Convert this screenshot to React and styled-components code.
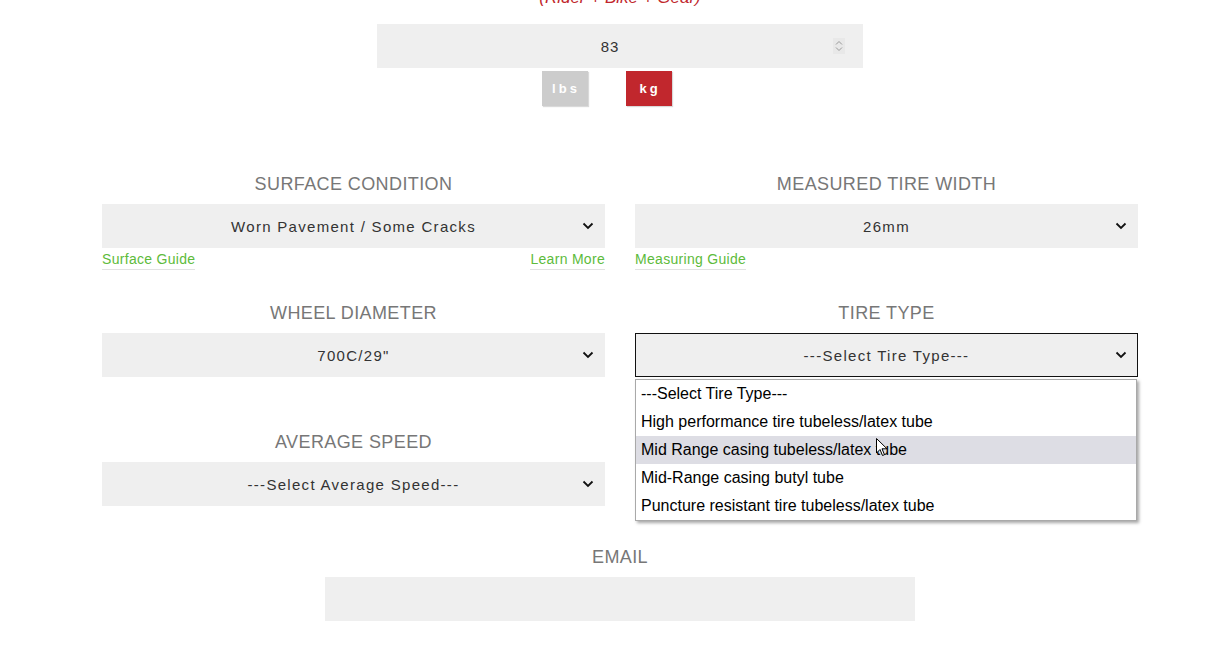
import React, { useState } from 'react';
import styled, { createGlobalStyle } from 'styled-components';

const GlobalStyle = createGlobalStyle`
  html, body {
    margin: 0;
    padding: 0;
    background: #fff;
    overflow: hidden;
  }
  body {
    font-family: "Liberation Sans", Arial, sans-serif;
  }
`;

const Page = styled.div`
  width: 1036px;
  margin-left: 102px;
  display: flex;
  flex-direction: column;
  align-items: center;
`;

const Subtitle = styled.div`
  margin-top: -12px;
  height: 20px;
  line-height: 20px;
  font-size: 17px;
  font-style: italic;
  color: #c1272d;
`;

const NumberBox = styled.div`
  margin-top: 16px;
  width: 486px;
  height: 44px;
  box-sizing: border-box;
  padding-right: 20px;
  background: #efefef;
  display: flex;
  align-items: center;
  justify-content: center;
  position: relative;
  font-size: 15px;
  color: #333;
  letter-spacing: 1px;
`;

const Spinner = styled.span`
  position: absolute;
  right: 18px;
  top: 14px;
  width: 12px;
  height: 16px;
  display: flex;
  align-items: center;
  justify-content: center;
  background: #e8e8e8;
`;

const UnitRow = styled.div`
  margin-top: 3px;
  display: flex;
  gap: 38px;
  margin-right: 27px;
`;

const UnitButton = styled.button`
  width: 46px;
  height: 35px;
  border: none;
  padding: 0;
  background: ${({ $active }) => ($active ? '#c1272d' : '#cccccc')};
  color: #fff;
  font-family: "Liberation Sans", Arial, sans-serif;
  font-weight: bold;
  font-size: 13px;
  letter-spacing: 3px;
  text-indent: 3px;
  box-shadow: 1px 1px 1px rgba(0, 0, 0, 0.15);
  cursor: pointer;
`;

const Grid = styled.div`
  margin-top: 67px;
  width: 100%;
  display: grid;
  grid-template-columns: 1fr 1fr;
  column-gap: 30px;
  row-gap: 30px;
`;

const Field = styled.div`
  display: flex;
  flex-direction: column;
  position: relative;
`;

const Label = styled.div`
  height: 22px;
  line-height: 22px;
  font-size: 18px;
  letter-spacing: 0.4px;
  color: #777;
  text-align: center;
  text-transform: uppercase;
  margin-bottom: 9px;
`;

const SelectBox = styled.div`
  height: 44px;
  box-sizing: border-box;
  background: #efefef;
  border: ${({ $focused }) => ($focused ? '1px solid #111' : '1px solid #efefef')};
  display: flex;
  align-items: center;
  justify-content: center;
  position: relative;
  font-size: 15px;
  color: #333;
  letter-spacing: 1.3px;
`;

const Chevron = styled.svg`
  position: absolute;
  right: 10px;
  top: 50%;
  margin-top: -5px;
`;

const LinkRow = styled.div`
  height: 24px;
  display: flex;
  justify-content: space-between;
  align-items: flex-start;
  padding-top: 3px;
  box-sizing: border-box;
`;

const GuideLink = styled.a`
  font-size: 14px;
  letter-spacing: 0.3px;
  color: #5dbb3b;
  text-decoration: none;
  line-height: 17px;
  border-bottom: 1px solid #e2e2e2;
  padding-bottom: 1px;
`;

const Dropdown = styled.ul`
  position: absolute;
  top: 77px;
  left: 0;
  right: 1px;
  margin: 0;
  padding: 0;
  list-style: none;
  background: #fff;
  border: 1px solid #a9a9a9;
  box-shadow: 2px 2px 3px rgba(0, 0, 0, 0.35);
  z-index: 5;
`;

const Option = styled.li`
  height: 28px;
  line-height: 28px;
  padding-left: 5px;
  font-size: 16px;
  color: #000;
  background: ${({ $hover }) => ($hover ? '#dddde4' : 'transparent')};
`;

const Cursor = styled.svg`
  position: absolute;
  left: 240px;
  top: 58px;
`;

const EmailSection = styled.div`
  margin-top: 40px;
  display: flex;
  flex-direction: column;
  align-items: center;
`;

const EmailInput = styled.div`
  width: 590px;
  height: 44px;
  background: #efefef;
`;

const ChevronIcon = () => (
  <Chevron width="12" height="10" viewBox="0 0 12 10">
    <path d="M1.5 2.5 L6 7 L10.5 2.5" fill="none" stroke="#111" strokeWidth="1.8" />
  </Chevron>
);

const Select = ({ value, focused }) => (
  <SelectBox $focused={focused}>
    {value}
    <ChevronIcon />
  </SelectBox>
);

const tireTypes = [
  '---Select Tire Type---',
  'High performance tire tubeless/latex tube',
  'Mid Range casing tubeless/latex tube',
  'Mid-Range casing butyl tube',
  'Puncture resistant tire tubeless/latex tube',
];

const App = () => {
  const [unit, setUnit] = useState('kg');

  return (
    <>
      <GlobalStyle />
      <Page>
        <Subtitle>(Rider + Bike + Gear)</Subtitle>
        <NumberBox>
          83
          <Spinner>
            <svg width="8" height="12" viewBox="0 0 8 12">
              <path d="M1 4.5 L4 1.5 L7 4.5 M1 7.5 L4 10.5 L7 7.5" fill="none" stroke="#999" strokeWidth="1" />
            </svg>
          </Spinner>
        </NumberBox>
        <UnitRow>
          <UnitButton $active={unit === 'lbs'} onClick={() => setUnit('lbs')}>lbs</UnitButton>
          <UnitButton $active={unit === 'kg'} onClick={() => setUnit('kg')}>kg</UnitButton>
        </UnitRow>

        <Grid>
          <Field>
            <Label>Surface Condition</Label>
            <Select value="Worn Pavement / Some Cracks" />
            <LinkRow>
              <GuideLink href="#">Surface Guide</GuideLink>
              <GuideLink href="#">Learn More</GuideLink>
            </LinkRow>
          </Field>
          <Field>
            <Label>Measured Tire Width</Label>
            <Select value="26mm" />
            <LinkRow>
              <GuideLink href="#">Measuring Guide</GuideLink>
            </LinkRow>
          </Field>

          <Field>
            <Label>Wheel Diameter</Label>
            <Select value={'700C/29"'} />
            <LinkRow />
          </Field>
          <Field>
            <Label>Tire Type</Label>
            <Select value="---Select Tire Type---" focused />
            <LinkRow />
            <Dropdown>
              {tireTypes.map((t, i) => (
                <Option key={t} $hover={i === 2}>{t}</Option>
              ))}
              <Cursor width="12" height="19" viewBox="0 0 12 19">
                <path d="M0.5 0.5 L0.5 15 L4 11.5 L6.5 17.5 L8.5 16.7 L6 10.8 L11 10.8 Z" fill="#fff" stroke="#000" strokeWidth="1" />
              </Cursor>
            </Dropdown>
          </Field>

          <Field>
            <Label>Average Speed</Label>
            <Select value="---Select Average Speed---" />
          </Field>
        </Grid>

        <EmailSection>
          <Label>Email</Label>
          <EmailInput />
        </EmailSection>
      </Page>
    </>
  );
};

export default App;
